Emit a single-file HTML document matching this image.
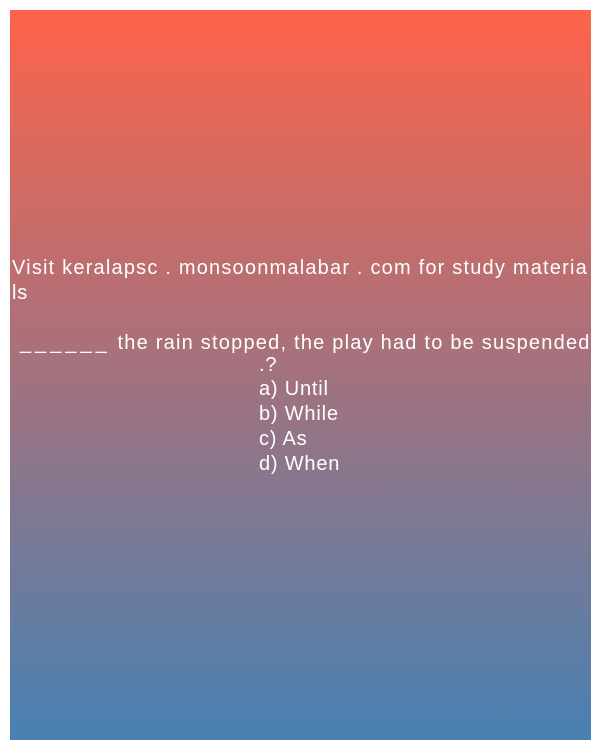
<!DOCTYPE html>
<html><head><meta charset="utf-8"><style>
html,body{margin:0;padding:0;background:#fff;width:600px;height:750px;overflow:hidden}
.box{position:absolute;left:10px;top:10px;width:581px;height:730px;background:linear-gradient(#fe634a,#4781b3)}
.t{position:absolute;color:#fff;font-family:"Liberation Sans",sans-serif;font-size:20px;white-space:pre;line-height:25px;letter-spacing:0.8px}
</style></head><body>
<div class="box"></div>
<div class="t" style="left:12px;top:256px;letter-spacing:1.2px">Visit keralapsc . monsoonmalabar . com for study materia</div>
<div class="t" style="left:12px;top:281px">ls</div>
<div class="t" style="left:20px;top:331px;letter-spacing:1.22px"><span style="letter-spacing:4px">______</span> the rain stopped, the play had to be suspended</div>
<div class="t" style="left:259px;top:353px">.?</div>
<div class="t" style="left:259px;top:377px">a) Until</div>
<div class="t" style="left:259px;top:402px">b) While</div>
<div class="t" style="left:259px;top:427px">c) As</div>
<div class="t" style="left:259px;top:452px">d) When</div>
</body></html>
